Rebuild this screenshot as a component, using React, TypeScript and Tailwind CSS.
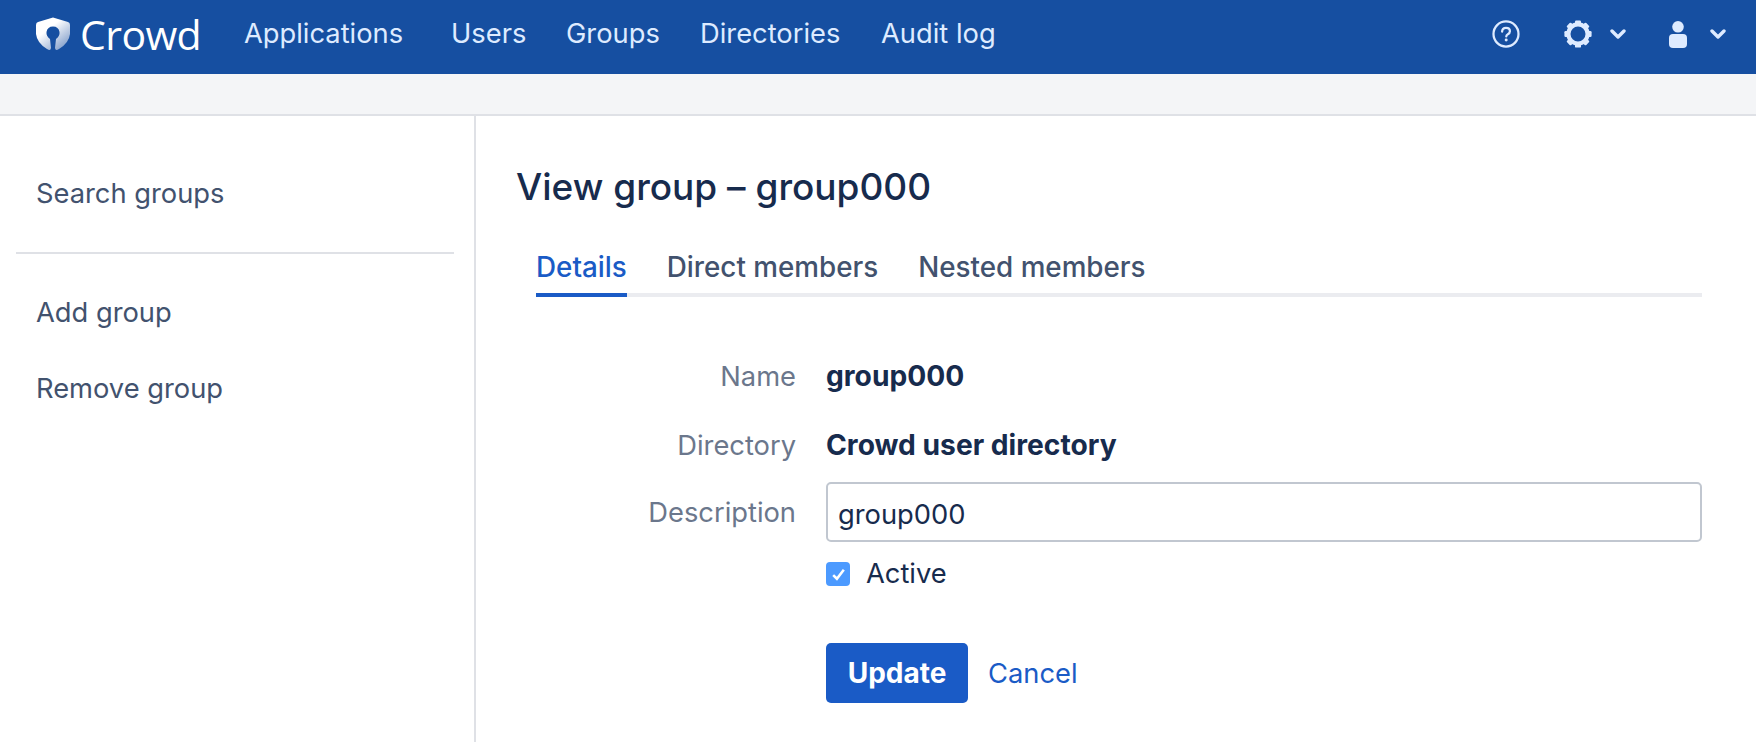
const navItems = [
  { label: "Applications", width: "w-[207px]" },
  { label: "Users", width: "w-[115px]" },
  { label: "Groups", width: "w-[134px]" },
  { label: "Directories", width: "w-[181px]" },
  { label: "Audit log", width: "w-auto" },
];

function Shield() {
  return (
    <svg width="34" height="34" viewBox="0 0 34 34">
      <defs>
        <linearGradient id="shieldFade" x1="0.3" y1="0.4" x2="0.8" y2="1">
          <stop offset="0" stopColor="#ffffff" />
          <stop offset="1" stopColor="#7f9cc9" />
        </linearGradient>
      </defs>
      <path
        d="M17 0.5 L32 5 Q34 5.6 34 8 V17 Q33 26 23 32 L21 33 Q19.5 33.6 19 31 L20 22 Q24 19 23.5 15 Q22.5 9.5 17 9.5 Q11.5 9.5 10.5 15 Q10 19 14 22 L15 31 Q14.5 33.6 13 33 L11 32 Q1 26 0 17 V8 Q0 5.6 2 5 Z"
        fill="url(#shieldFade)"
      />
      <circle cx="17" cy="15" r="3.2" fill="#164fa1" />
    </svg>
  );
}

function Chevron({ className }: { className: string }) {
  return (
    <svg width="16" height="12" viewBox="0 0 16 12" className={className}>
      <path d="M2 3 L8 9 L14 3" fill="none" stroke="currentColor" strokeWidth="3.4" strokeLinecap="round" strokeLinejoin="round" />
    </svg>
  );
}

function Gear() {
  const angles = [0, 45, 90, 135, 180, 225, 270, 315];
  return (
    <svg width="28" height="28" viewBox="0 0 28 28" className="mr-[18px]">
      <circle cx="14" cy="14" r="9.6" fill="none" stroke="currentColor" strokeWidth="4.2" />
      {angles.map((a) => (
        <rect key={a} x="11" y="0.4" width="6" height="5" rx="1.2" fill="currentColor" transform={`rotate(${a} 14 14)`} />
      ))}
    </svg>
  );
}

function HeaderIcons() {
  return (
    <div className="flex items-center text-[#deebff]">
      <svg width="28" height="28" viewBox="0 0 30 30" className="mr-[44px]">
        <circle cx="15" cy="15" r="13.4" fill="none" stroke="currentColor" strokeWidth="2.4" />
        <path d="M10.8 12.4 Q11 8.4 15 8.4 Q19.2 8.4 19.2 12 Q19.2 14 17 15.2 Q15.3 16.2 15.3 17.6" fill="none" stroke="currentColor" strokeWidth="2.4" strokeLinecap="round" />
        <circle cx="15.2" cy="21.4" r="1.6" fill="currentColor" />
      </svg>
      <Gear />
      <Chevron className="mr-[43px]" />
      <svg width="18" height="27" viewBox="0 0 18 27" className="mr-[23px]">
        <circle cx="9" cy="5.8" r="5.8" fill="currentColor" />
        <path d="M0 17 Q0 13 4 13 H14 Q18 13 18 17 V23 Q18 27 14 27 H4 Q0 27 0 23 Z" fill="currentColor" />
      </svg>
      <Chevron className="mr-[30px]" />
    </div>
  );
}

function FormRow({ label, children }: { label: string; children: React.ReactNode }) {
  return (
    <div className="flex items-center">
      <div className="w-[290px] pr-[30px] text-right text-[#6b778c]">{label}</div>
      <div className="flex-1">{children}</div>
    </div>
  );
}

export default function App() {
  return (
    <div className="h-[742px] w-[1756px] overflow-hidden bg-white font-['Inter',sans-serif] text-[27.3px] text-[#172b4d]">
      <header className="flex h-[74px] items-center justify-between bg-[#164fa1] pb-[6px]">
        <div className="flex items-center">
          <div className="ml-[36px] mr-[10px] flex items-center">
            <Shield />
          </div>
          <span className="mr-[38px] w-[126px] font-['Open_Sans',sans-serif] text-[41px] font-normal leading-none tracking-[-0.6px] text-white">Crowd</span>
          {navItems.map((item) => (
            <a key={item.label} className={`${item.width} mt-[1px] text-[#deebff]`}>
              {item.label}
            </a>
          ))}
        </div>
        <HeaderIcons />
      </header>
      <div className="h-[42px] border-b-2 border-[#dfe1e6] bg-[#f4f5f7]" />

      <div className="flex h-[626px]">
        <aside className="w-[476px] shrink-0 border-r-2 border-[#dfe1e6] pl-[16px] pr-[20px] pt-[58px] text-[#42526e]">
          <div className="px-[20px] leading-[40px]">Search groups</div>
          <div className="mt-[38px] border-t-2 border-[#dfe1e6]" />
          <div className="mt-[39px] px-[20px] leading-[40px]">Add group</div>
          <div className="mt-[36px] px-[20px] leading-[40px]">Remove group</div>
        </aside>

        <main className="flex-1 pl-[40px] pr-[54px] pt-[47px]">
          <h1 className="text-[37px] font-medium leading-[48px]">View group – group000</h1>
          <div className="ml-[20px] mt-[36px] flex gap-[40px] border-b-4 border-[#ebecf0] text-[27.8px] font-medium text-[#42526e]">
            <a className="relative pb-[6px] leading-[40px] text-[#1a5bc6]">
              Details
              <span className="absolute bottom-[-4px] left-0 h-[4px] w-full bg-[#1a5bc6]" />
            </a>
            <a className="pb-[6px] leading-[40px]">Direct members</a>
            <a className="pb-[6px] leading-[40px]">Nested members</a>
          </div>

          <div className="ml-[20px] mt-[60px] flex flex-col leading-[39px]">
            <FormRow label="Name">
              <span className="text-[28.2px] font-bold">group000</span>
            </FormRow>
            <div className="mt-[30px]">
              <FormRow label="Directory">
                <span className="text-[28.2px] font-bold">Crowd user directory</span>
              </FormRow>
            </div>
            <div className="mt-[17px]">
              <FormRow label="Description">
                <div className="flex h-[60px] items-center rounded-[5px] border-2 border-[#c1c7d0] px-[10px] pt-[5px]">group000</div>
              </FormRow>
            </div>
            <div className="ml-[290px] mt-[15px] flex items-center">
              <span className="flex h-[24px] w-[24px] items-center justify-center rounded-[4px] bg-[#4c9aff]">
                <svg width="17" height="17" viewBox="0 0 16 16">
                  <path d="M3 8.5 L6.5 12 L13 3.5" fill="none" stroke="white" strokeWidth="2.4" />
                </svg>
              </span>
              <span className="ml-[16px] leading-[34px]">Active</span>
            </div>
            <div className="ml-[290px] mt-[52px] flex items-center">
              <button className="h-[60px] w-[142px] rounded-[5px] bg-[#1a5bc6] text-[28px] font-bold text-white">Update</button>
              <a className="ml-[20px] text-[#1a5bc6]">Cancel</a>
            </div>
          </div>
        </main>
      </div>
    </div>
  );
}
